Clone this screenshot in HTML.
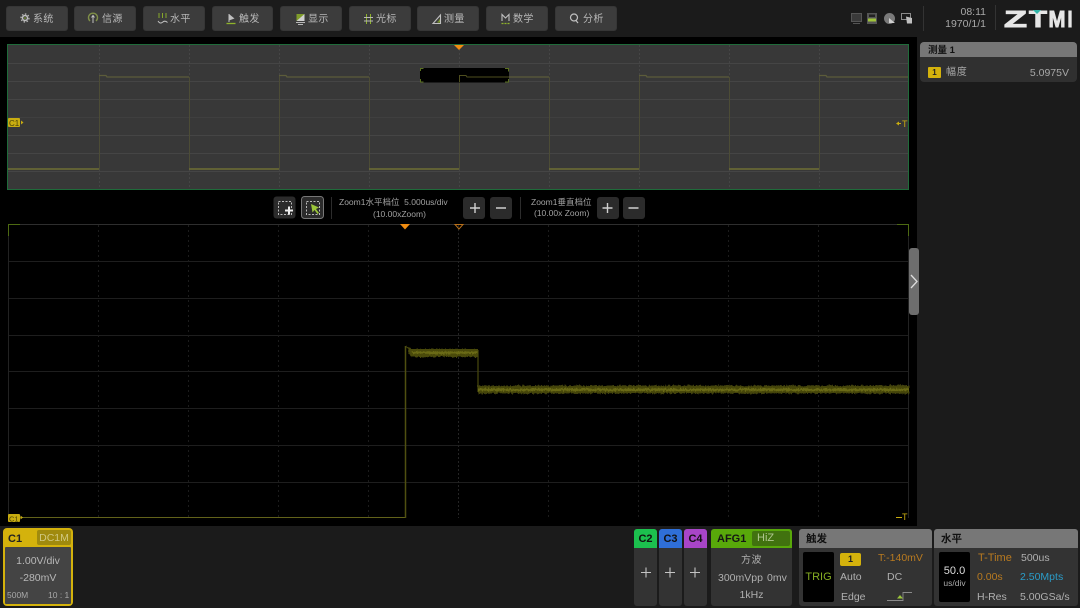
<!DOCTYPE html>
<html><head><meta charset="utf-8">
<style>
html,body{margin:0;padding:0;background:#000}
#s{position:relative;width:1080px;height:608px;overflow:hidden;background:#000;font-family:"Liberation Sans","Noto Sans CJK SC",sans-serif;color:#bdbdbd}
#s div{position:absolute;box-sizing:border-box}
.t{white-space:nowrap;line-height:1}
.btn{top:6px;height:25px;background:#3c3c3c;border-radius:3px;border:1px solid #363636}
.btn span{position:absolute;top:6px;font-size:10px;line-height:13px;color:#b8b8b8;letter-spacing:.4px;white-space:nowrap}
.btn svg{position:absolute;left:0;top:0}
.zb{background:#2b2b2b;border-radius:3px;width:22px;height:22px;top:197px}
.ch{top:529px;width:23px;height:77px;background:#333;border-radius:3px}
.chh{left:0;top:0;width:23px;height:19px;border-radius:3px 3px 0 0;color:#111;font-size:11px;font-weight:bold;text-align:center;line-height:20px}
</style></head><body><div id="s">

<div style="left:0;top:0;width:1080px;height:37px;background:#1b1b1b"></div>
<div style="left:917px;top:37px;width:163px;height:490px;background:#1b1b1b"></div>
<div style="left:0;top:526px;width:1080px;height:82px;background:#1b1b1b"></div>

<div class="btn" style="left:6px;width:62px"><svg width="62" height="25" fill="none"><circle cx="18" cy="11" r="2.500" stroke="#c0c0c0" stroke-width="1.500"/><circle cx="18" cy="11" r="4" stroke="#c0c0c0" stroke-dasharray="1.500 1.600" stroke-width="1.200"/><circle cx="18" cy="11" r=".8" fill="#8fb32a"/></svg><span style="left:26px">系统</span></div>
<div class="btn" style="left:74px;width:62px"><svg width="62" height="25" fill="none"><path d="M15 14a4.500 4.500 0 1 1 6 0" stroke="#7f8f48" stroke-width="1.400"/><path d="M18 16V8.500M16.500 10.500l1.500-2 1.500 2" stroke="#c0c0c0" stroke-width="1"/></svg><span style="left:27px">信源</span></div>
<div class="btn" style="left:143px;width:62px"><svg width="62" height="25" fill="none"><path d="M15 6v5M18.500 6v5M22 6v5" stroke="#8fb32a" stroke-width=".9"/><path d="M14 14c1.500 2.500 3 2.500 4.500 1.200S21.500 13.500 23.500 15.500" stroke="#c0c0c0" stroke-width="1"/></svg><span style="left:26px">水平</span></div>
<div class="btn" style="left:212px;width:61px"><svg width="62" height="25" fill="none"><path d="M16 7v6.500l5.500-2z" fill="#c0c0c0"/><path d="M16 7v8" stroke="#c0c0c0"/><path d="M13.500 16.500h9" stroke="#8fb32a" stroke-width="1.300"/></svg><span style="left:26px">触发</span></div>
<div class="btn" style="left:280px;width:62px"><svg width="62" height="25"><rect x="15.500" y="7" width="8" height="7" fill="#d0d0d0"/><path d="M15.500 14V7h8z" fill="#7f9c2a"/><path d="M15 15.500h9M17 17.500h5" stroke="#b8b8b8" fill="none" stroke-width=".9"/></svg><span style="left:27px">显示</span></div>
<div class="btn" style="left:349px;width:62px"><svg width="62" height="25" fill="none"><path d="M16.500 7v10M20.500 7v10" stroke="#8fb32a" stroke-width="1"/><path d="M14 10.500h9M14 14h9" stroke="#b8b8b8" stroke-width=".9"/></svg><span style="left:26px">光标</span></div>
<div class="btn" style="left:417px;width:62px"><svg width="62" height="25" fill="none"><path d="M15 16.500L22.500 8v8.500z" stroke="#c0c0c0" stroke-width="1.100"/><path d="M19.500 15h1.800v-2.500" stroke="#8fb32a"/></svg><span style="left:26px">测量</span></div>
<div class="btn" style="left:486px;width:62px"><svg width="62" height="25" fill="none"><path d="M15 14V7.500l3.500 3.500 3.500-3.500V14" stroke="#c0c0c0" stroke-width="1.100"/><path d="M14.500 16.500h8" stroke="#8fb32a" stroke-width="1.300" stroke-dasharray="2 1"/></svg><span style="left:26px">数学</span></div>
<div class="btn" style="left:555px;width:62px"><svg width="62" height="25" fill="none"><circle cx="18" cy="10.500" r="3.500" stroke="#c0c0c0" stroke-width="1.200"/><path d="M20 13.500l2 2.500" stroke="#c0c0c0" stroke-width="1.200"/></svg><span style="left:27px">分析</span></div>

<svg style="position:absolute;left:848px;top:8px" width="70" height="20" fill="none">
<rect x="3.500" y="5.500" width="10" height="8" stroke="#555" fill="#3a3a3a"/><path d="M5 15.500h7" stroke="#555"/>
<rect x="19" y="5" width="10" height="11" fill="#555"/><rect x="20" y="10.500" width="8" height="3" fill="#9fc43a"/><rect x="21" y="6.500" width="6" height="2.500" fill="#222"/>
<circle cx="41.500" cy="10.500" r="5.500" fill="#7a7a7a"/><path d="M41 10l6 5h-6z" fill="#cfcfcf"/>
<rect x="53.500" y="5.500" width="9" height="6" stroke="#8a8a8a"/><path d="M58 8.500l6 1.500v5.500h-5z" fill="#c0c0c0"/></svg>
<div style="left:923px;top:6px;width:1px;height:25px;background:#333"></div>
<div style="left:995px;top:5px;width:1px;height:25px;background:#333"></div>
<div class="t" style="right:94px;top:7px;font-size:10.500px;color:#a8a8a8">08:11</div>
<div class="t" style="right:94px;top:19px;font-size:10.500px;color:#a8a8a8">1970/1/1</div>

<svg style="position:absolute;left:1000px;top:6px" width="76" height="24" font-family="Liberation Sans" font-weight="bold" font-size="23" fill="#e6e6e6" stroke="#e6e6e6" stroke-width=".9">
<text x="4" y="21" textLength="23" lengthAdjust="spacingAndGlyphs">Z</text>
<text x="29" y="21" textLength="18" lengthAdjust="spacingAndGlyphs">T</text>
<text x="48.500" y="21" textLength="17" lengthAdjust="spacingAndGlyphs">M</text>
<text x="67.500" y="21" textLength="5" lengthAdjust="spacingAndGlyphs">I</text>
<polygon points="33,4 41,4 37,8" fill="#2fb5a8" stroke="none"/></svg>

<!-- upper scope -->
<svg style="position:absolute;left:0;top:40px" width="915" height="155" viewBox="0 40 915 155">
<rect x="7.500" y="44.500" width="901" height="145" fill="#383838" stroke="#1f6b3a"/>
<g stroke="#454545"><path d="M8 63.500H908M8 81.500H908M8 99.500H908M8 135.500H908M8 153.500H908M8 171.500H908"/></g>
<path d="M8 117.500H908" stroke="#3f3f3f"/>
<g stroke="#454545" stroke-dasharray="2 2"><path d="M99.500 45V189M189.500 45V189M279.500 45V189M369.500 45V189M459.500 45V189M549.500 45V189M639.500 45V189M729.500 45V189M819.500 45V189"/></g>
<path d="M99.500 169V76M189.500 77V169M279.500 169V76M369.500 77V169M459.500 169V82M549.500 77V169M639.500 169V76M729.500 77V169M819.500 169V76" fill="none" stroke="#4c4c36" stroke-width="1"/>
<path d="M99 75.500H106L107 77H189M279 75.500H286L287 77H369M509 77H549M639 75.500H646L647 77H729M819 75.500H826L827 77H908" fill="none" stroke="#5c5c3a" stroke-width="1.200"/>
<path d="M8 169H99M189 169H279M369 169H459M549 169H639M729 169H819" stroke="#6f6f34" stroke-width="1.600"/>
<rect x="420" y="68" width="89" height="14.500" fill="#000"/>
<path d="M420.500 71v-2.500h3M505 68.500h3.500v3M420.500 79v3h3M505 82h3.500v-3" stroke="#5a7020" fill="none"/>
<path d="M459.500 82V75.500H466L467 77H509" fill="none" stroke="#4e4e1e"/>
<polygon points="454,45 464,45 459,50" fill="#f08c10"/>
<rect x="8" y="118" width="12" height="9" rx="1" fill="#c8ac10"/>
<text x="9" y="126" font-family="Liberation Sans" font-size="8" fill="#4a4208">C1</text>
<polygon points="21,120.500 23.500,122.500 21,124.500" fill="#c8ac10"/>
<path d="M897 123.500h4" stroke="#c8ac10"/><polygon points="896,123.500 899,121.500 899,125.500" fill="#c8ac10"/>
<text x="902" y="127" font-family="Liberation Sans" font-size="9" fill="#c8ac10">T</text>
</svg>

<!-- zoom controls -->
<svg style="position:absolute;left:273px;top:196px" width="52" height="24" fill="none">
<rect x="0.500" y="0.500" width="22" height="22" rx="3" fill="#2b2b2b"/>
<rect x="5.500" y="5.500" width="13" height="13" stroke="#bbb" stroke-dasharray="2 1.500"/>
<path d="M12 14.500h8M16 10.500v8" stroke="#eee" stroke-width="2"/>
<rect x="28.500" y="0.500" width="22" height="22" rx="3" fill="#2b2b2b" stroke="#777"/>
<rect x="33.500" y="5.500" width="13" height="13" stroke="#bbb" stroke-dasharray="2 1.500"/>
<path d="M38 8l8 3.500-3 1.500 3 4-1.500 1-3-4-2 2.500z" fill="#9bc53a"/>
</svg>
<div style="left:331px;top:197px;width:1px;height:22px;background:#2c2c2c"></div>
<div class="t" style="left:339px;top:198px;font-size:8.500px;color:#a0a0a0">Zoom1水平档位&nbsp; 5.000us/div</div>
<div class="t" style="left:373px;top:210px;font-size:8.500px;color:#a0a0a0">(10.00xZoom)</div>
<div class="zb" style="left:463px"></div><div class="zb" style="left:490px"></div>
<div style="left:520px;top:197px;width:1px;height:22px;background:#2c2c2c"></div>
<div class="t" style="left:531px;top:198px;font-size:8.500px;color:#a0a0a0">Zoom1垂直档位</div>
<div class="t" style="left:534px;top:209px;font-size:8.500px;color:#a0a0a0">(10.00x Zoom)</div>
<div class="zb" style="left:597px"></div><div class="zb" style="left:623px"></div>
<svg style="position:absolute;left:460px;top:195px" width="190" height="26" stroke="#d0d0d0" stroke-width="1.400">
<path d="M10 13h10M15 8v10M36 13h10M142.500 13h10M147.500 8v10M168.500 13h10"/></svg>

<!-- lower scope -->
<svg style="position:absolute;left:0;top:220px" width="915" height="305" viewBox="0 220 915 305">
<defs><filter id="n" x="-5%" y="-100%" width="110%" height="300%"><feTurbulence type="fractalNoise" baseFrequency=".6 .25" numOctaves="2" seed="4"/><feDisplacementMap in="SourceGraphic" scale="4" xChannelSelector="G" yChannelSelector="R"/></filter></defs>
<rect x="8" y="224" width="901" height="295" fill="#000"/>
<g stroke="#1e1e1e"><path d="M8 261.500H908M8 298.500H908M8 335.500H908M8 371.500H908M8 408.500H908M8 445.500H908M8 482.500H908"/></g>
<g stroke="#1c1c1c" stroke-dasharray="2 3"><path d="M98.500 225V518M188.500 225V518M278.500 225V518M368.500 225V518M548.500 225V518M638.500 225V518M728.500 225V518M818.500 225V518"/></g>
<path d="M458.500 225V518" stroke="#242424" stroke-dasharray="2 2"/>
<path d="M8 224.500H908" stroke="#2e2e2e"/>
<path d="M8.500 224V518M908.500 224V518" stroke="#222"/>
<path d="M8.500 236V224.500H20M897 224.500H908.500V236" stroke="#4d6a12" fill="none"/>
<path d="M8 517.500H405" stroke="#62621a"/>
<path d="M405.500 518V346" stroke="#4f4f10" stroke-width="1.500"/>
<path d="M478 350V392" stroke="#45450c" stroke-width="1.300"/>
<path d="M406 345L411 349H478V357H411Z" fill="#48480a" filter="url(#n)"/>
<rect x="411" y="349" width="67" height="7" fill="#4a4a0a"/>
<rect x="412" y="351.500" width="66" height="2.500" fill="#6a6a16" filter="url(#n)"/>
<rect x="478" y="385.500" width="431" height="8" fill="#3f3f08" filter="url(#n)"/>
<rect x="478" y="386.500" width="431" height="6" fill="#474709"/>
<rect x="478" y="388.500" width="431" height="2.500" fill="#6a6a18" filter="url(#n)"/>
<polygon points="400,224 410,224 405,229.500" fill="#f08c10"/>
<polygon points="455,224.500 463,224.500 459,229" fill="none" stroke="#b8701a"/>
<rect x="8" y="514" width="12" height="8" rx="1" fill="#c8ac10"/>
<text x="9" y="521.500" font-family="Liberation Sans" font-size="7.500" fill="#4a4208">C1</text>
<polygon points="20.500,515.500 23,517.500 20.500,519.500" fill="#c8ac10"/>
<text x="902" y="520" font-family="Liberation Sans" font-size="9" fill="#c8ac10">T</text>
<path d="M896 517.500h6" stroke="#c8ac10"/>
</svg>

<!-- handle -->
<div style="left:909px;top:248px;width:10px;height:67px;background:#6e6e6e;border-radius:3px"></div>
<svg style="position:absolute;left:909px;top:272px" width="10" height="20"><path d="M2 3l6 6.500-6 6.500" fill="none" stroke="#ddd" stroke-width="1.300"/></svg>

<!-- measure -->
<div style="left:920px;top:42px;width:157px;height:40px;background:#303030;border-radius:4px"></div>
<div style="left:920px;top:42px;width:157px;height:15px;background:#777;border-radius:4px 4px 0 0"></div>
<div class="t" style="left:928px;top:46px;font-size:9.500px;font-weight:bold;color:#111">测量 1</div>
<div style="left:928px;top:67px;width:13px;height:11px;background:#d4b20c;border-radius:1px;color:#222;font-size:8px;font-weight:bold;text-align:center;line-height:11px">1</div>
<div class="t" style="left:946px;top:68px;font-size:10px;color:#a8a8a8;letter-spacing:.8px">幅度</div>
<div class="t" style="right:11px;top:68px;font-size:10.500px;color:#a8a8a8">5.0975V</div>

<!-- C1 -->
<div style="left:3px;top:528px;width:70px;height:78px;background:#d4b20c;border-radius:4px"></div>
<div style="left:5px;top:547px;width:66px;height:57px;background:#444;border-radius:1px"></div>
<div class="t" style="left:8px;top:534px;font-size:11px;font-weight:bold;color:#222">C1</div>
<div style="left:37px;top:530px;width:34px;height:15px;background:#a08a0e;border-radius:2px;color:#d0c880;font-size:10.500px;text-align:center;line-height:16px;white-space:nowrap">DC1M</div>
<div class="t" style="left:5px;width:66px;text-align:center;top:555px;font-size:10.500px;line-height:12px;color:#b8b8b8">1.00V/div</div>
<div class="t" style="left:5px;width:66px;text-align:center;top:572px;font-size:10.500px;line-height:12px;color:#b8b8b8">-280mV</div>
<div class="t" style="left:7px;top:591px;font-size:8.500px;color:#a8a8a8">500M</div>
<div class="t" style="left:48px;top:591px;font-size:8.500px;color:#a8a8a8">10 : 1</div>

<!-- C2-4 -->
<div class="ch" style="left:634px"><div class="chh" style="background:#1cc04e">C2</div></div>
<div class="ch" style="left:659px"><div class="chh" style="background:#2f6fd8">C3</div></div>
<div class="ch" style="left:684px"><div class="chh" style="background:#a845c8">C4</div></div>
<svg style="position:absolute;left:634px;top:565px" width="75" height="16" stroke="#c4c4c4" stroke-width="1.100"><path d="M7 7.500h10M12 2.500v10M31 7.500h10M36 2.500v10M56 7.500h10M61 2.500v10"/></svg>

<!-- AFG -->
<div style="left:711px;top:529px;width:81px;height:77px;background:#333;border-radius:3px"></div>
<div style="left:711px;top:529px;width:81px;height:19px;background:#58a80a;border-radius:3px 3px 0 0"></div>
<div class="t" style="left:717px;top:534px;font-size:11px;font-weight:bold;color:#151515">AFG1</div>
<div style="left:752px;top:531px;width:38px;height:15px;background:#41720f;border-radius:2px;color:#b0c890;font-size:11px;line-height:15px;padding-left:5px">HiZ</div>
<div class="t" style="left:711px;width:81px;text-align:center;top:556px;font-size:10px;color:#b0b0b0;letter-spacing:.5px">方波</div>
<div class="t" style="left:718px;top:573px;font-size:10.500px;color:#b0b0b0">300mVpp</div>
<div class="t" style="left:767px;top:573px;font-size:10.500px;color:#b0b0b0">0mv</div>
<div class="t" style="left:711px;width:81px;text-align:center;top:590px;font-size:10.500px;color:#b0b0b0">1kHz</div>

<!-- trigger -->
<div style="left:799px;top:529px;width:133px;height:77px;background:#333;border-radius:3px"></div>
<div style="left:799px;top:529px;width:133px;height:19px;background:#777;border-radius:3px 3px 0 0"></div>
<div class="t" style="left:806px;top:534px;font-size:10.500px;font-weight:bold;color:#111">触发</div>
<div style="left:803px;top:552px;width:31px;height:50px;background:#000;border-radius:2px;color:#86ad22;font-size:11px;text-align:center;line-height:50px">TRIG</div>
<div style="left:840px;top:553px;width:21px;height:13px;background:#d4b20c;border-radius:2px;color:#222;font-size:9px;font-weight:bold;text-align:center;line-height:13px">1</div>
<div class="t" style="left:878px;top:553px;font-size:10.500px;color:#b87a20">T:-140mV</div>
<div class="t" style="left:840px;top:572px;font-size:10.500px;color:#b0b0b0">Auto</div>
<div class="t" style="left:887px;top:572px;font-size:10.500px;color:#b0b0b0">DC</div>
<div class="t" style="left:841px;top:592px;font-size:10.500px;color:#b0b0b0">Edge</div>
<svg style="position:absolute;left:886px;top:590px" width="30" height="14" fill="none"><path d="M1 10.500H17V2.500H26" stroke="#8a8a8a" stroke-width=".9"/><polygon points="11,8.500 14,5 17,8.500" fill="#9bc53a"/></svg>

<!-- horizontal -->
<div style="left:934px;top:529px;width:144px;height:77px;background:#333;border-radius:3px"></div>
<div style="left:934px;top:529px;width:144px;height:19px;background:#777;border-radius:3px 3px 0 0"></div>
<div class="t" style="left:941px;top:534px;font-size:10.500px;font-weight:bold;color:#111">水平</div>
<div style="left:939px;top:552px;width:31px;height:50px;background:#000;border-radius:2px"></div>
<div class="t" style="left:939px;width:31px;text-align:center;top:566px;font-size:11px;color:#ddd">50.0</div>
<div class="t" style="left:939px;width:31px;text-align:center;top:579px;font-size:8.500px;color:#aaa">us/div</div>
<div class="t" style="left:978px;top:553px;font-size:11px;color:#b87a20">T-Time</div>
<div class="t" style="left:1021px;top:553px;font-size:10.500px;color:#b0b0b0">500us</div>
<div class="t" style="left:977px;top:572px;font-size:10.500px;color:#b87a20">0.00s</div>
<div class="t" style="left:1020px;top:572px;font-size:10.500px;color:#2a9cc8">2.50Mpts</div>
<div class="t" style="left:977px;top:592px;font-size:10.500px;color:#b0b0b0">H-Res</div>
<div class="t" style="left:1020px;top:592px;font-size:10.500px;color:#b0b0b0">5.00GSa/s</div>

</div></body></html>
